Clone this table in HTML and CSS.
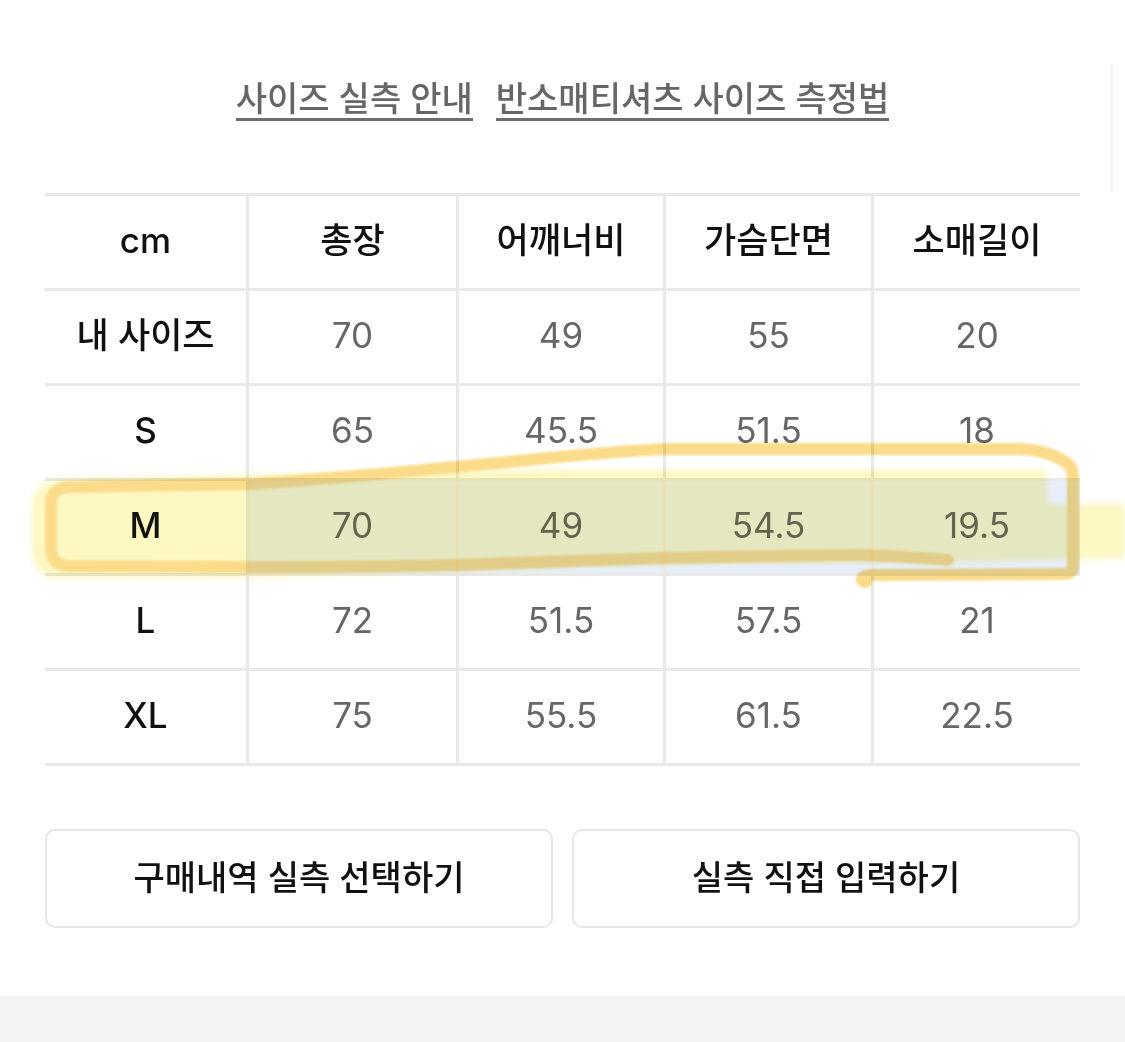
FILE: index.html
```html
<!DOCTYPE html>
<html lang="ko">
<head>
<meta charset="utf-8">
<title>사이즈 실측</title>
<link rel="stylesheet" href="styles.css">
</head>
<body>
<div class="page">
  <div class="links">
    <a class="link">사이즈 실측 안내</a>
    <a class="link">반소매티셔츠 사이즈 측정법</a>
  </div>

  <div class="chart">
    <div class="cell label">cm</div>
    <div class="cell label">총장</div>
    <div class="cell label">어깨너비</div>
    <div class="cell label">가슴단면</div>
    <div class="cell label">소매길이</div>

    <div class="cell label">내 사이즈</div>
    <div class="cell val">70</div>
    <div class="cell val">49</div>
    <div class="cell val">55</div>
    <div class="cell val">20</div>

    <div class="cell label">S</div>
    <div class="cell val">65</div>
    <div class="cell val">45.5</div>
    <div class="cell val">51.5</div>
    <div class="cell val">18</div>

    <div class="cell label">M</div>
    <div class="cell val sel">70</div>
    <div class="cell val sel">49</div>
    <div class="cell val sel">54.5</div>
    <div class="cell val sel">19.5</div>

    <div class="cell label">L</div>
    <div class="cell val">72</div>
    <div class="cell val">51.5</div>
    <div class="cell val">57.5</div>
    <div class="cell val">21</div>

    <div class="cell label">XL</div>
    <div class="cell val">75</div>
    <div class="cell val">55.5</div>
    <div class="cell val">61.5</div>
    <div class="cell val">22.5</div>
  </div>

  <div class="actions">
    <button class="btn">구매내역 실측 선택하기</button>
    <button class="btn">실측 직접 입력하기</button>
  </div>

  <div class="band"></div>

  <div class="scroll-hint"></div>

  <svg class="marker" width="1125" height="1042" viewBox="0 0 1125 1042" aria-hidden="true">
    <defs>
      <filter id="soft" x="-10%" y="-100%" width="120%" height="300%">
        <feGaussianBlur stdDeviation="3"/>
      </filter>
      <filter id="edge" x="-10%" y="-100%" width="120%" height="300%">
        <feGaussianBlur stdDeviation="0.8"/>
      </filter>
    </defs>
    <path class="hl-fill" filter="url(#soft)" d="M 32 505 C 32 486, 45 480, 70 479 L 250 475 L 460 470 L 1046 470 L 1048 504 L 1125 504 L 1125 558 L 1050 560 L 950 562 L 666 564 L 456 571 L 250 577 L 60 578 C 40 578, 32 566, 32 548 Z"/>
    <path class="hl-stroke" filter="url(#edge)" d="M 948 560 C 900 556, 870 555, 840 555 C 760 556, 700 557, 666 558 C 580 560, 500 564, 456 565 C 380 567, 320 567, 250 567 L 70 566 C 56 566, 51 560, 51 546 L 51 505 C 51 492, 58 487, 72 487 L 250 484 C 320 480, 400 472, 456 467 C 540 459, 610 451, 666 449 L 1020 449 C 1045 450, 1060 458, 1068 464 C 1073 468, 1073 474, 1073 485 L 1073 566 C 1073 572, 1070 574, 1062 574 L 870 575 C 860 576, 860 582, 866 582"/>
  </svg>
</div>
</body>
</html>
```

FILE: styles.css
```css
* {
  box-sizing: border-box;
}

html, body {
  margin: 0;
  padding: 0;
  background: #ffffff;
}

body {
  font-family: Inter, "Noto Sans CJK KR", sans-serif;
  font-weight: 500;
  color: #111111;
}

.page {
  position: relative;
  width: 1125px;
  min-height: 1042px;
  display: flex;
  flex-direction: column;
}

.links {
  display: flex;
  justify-content: center;
  gap: 23px;
  padding-top: 82px;
}

.link {
  font-size: 34px;
  line-height: 34px;
  color: #666666;
  padding-bottom: 2px;
  border-bottom: 3px solid #6e6e6e;
  text-decoration: none;
}

.chart {
  margin: 72px 0 0 45px;
  width: 1035px;
  display: grid;
  grid-template-columns: 204px 210px 207px 208px 206px;
  border-top: 3px solid #e9e9e9;
}

.cell {
  height: 95px;
  display: flex;
  align-items: center;
  justify-content: center;
  padding-bottom: 4px;
  font-size: 35px;
  line-height: 1;
  border-bottom: 3px solid #e9e9e9;
  border-right: 3px solid #e9e9e9;
}

.cell:nth-child(5n) {
  border-right: none;
}

.label {
  color: #111111;
}

.val {
  color: #666666;
  font-weight: 400;
}

.sel {
  background: #e6eefb;
}

.actions {
  display: flex;
  gap: 19px;
  margin: 63px 0 0 45px;
  width: 1035px;
}

.btn {
  flex: 1;
  height: 99px;
  border: 2px solid #e6e6e6;
  border-radius: 10px;
  background: #ffffff;
  font-family: Inter, "Noto Sans CJK KR", sans-serif;
  font-weight: 500;
  font-size: 34px;
  line-height: 1;
  color: #111111;
  padding: 0 0 2px 0;
}

.band {
  margin-top: 67px;
  flex: 1;
  min-height: 47px;
  background: #f4f4f4;
  border-top: 1px solid #f8f8f8;
}

.scroll-hint {
  position: absolute;
  left: 1110px;
  top: 64px;
  width: 3px;
  height: 128px;
  background: #f5f5f5;
}

.marker {
  position: absolute;
  left: 0;
  top: 0;
  pointer-events: none;
  mix-blend-mode: multiply;
}

.hl-fill {
  fill: #fdf8c2;
}

.hl-stroke {
  fill: none;
  stroke: #fbdc8a;
  stroke-width: 12;
  stroke-linecap: round;
  stroke-linejoin: round;
}
```
